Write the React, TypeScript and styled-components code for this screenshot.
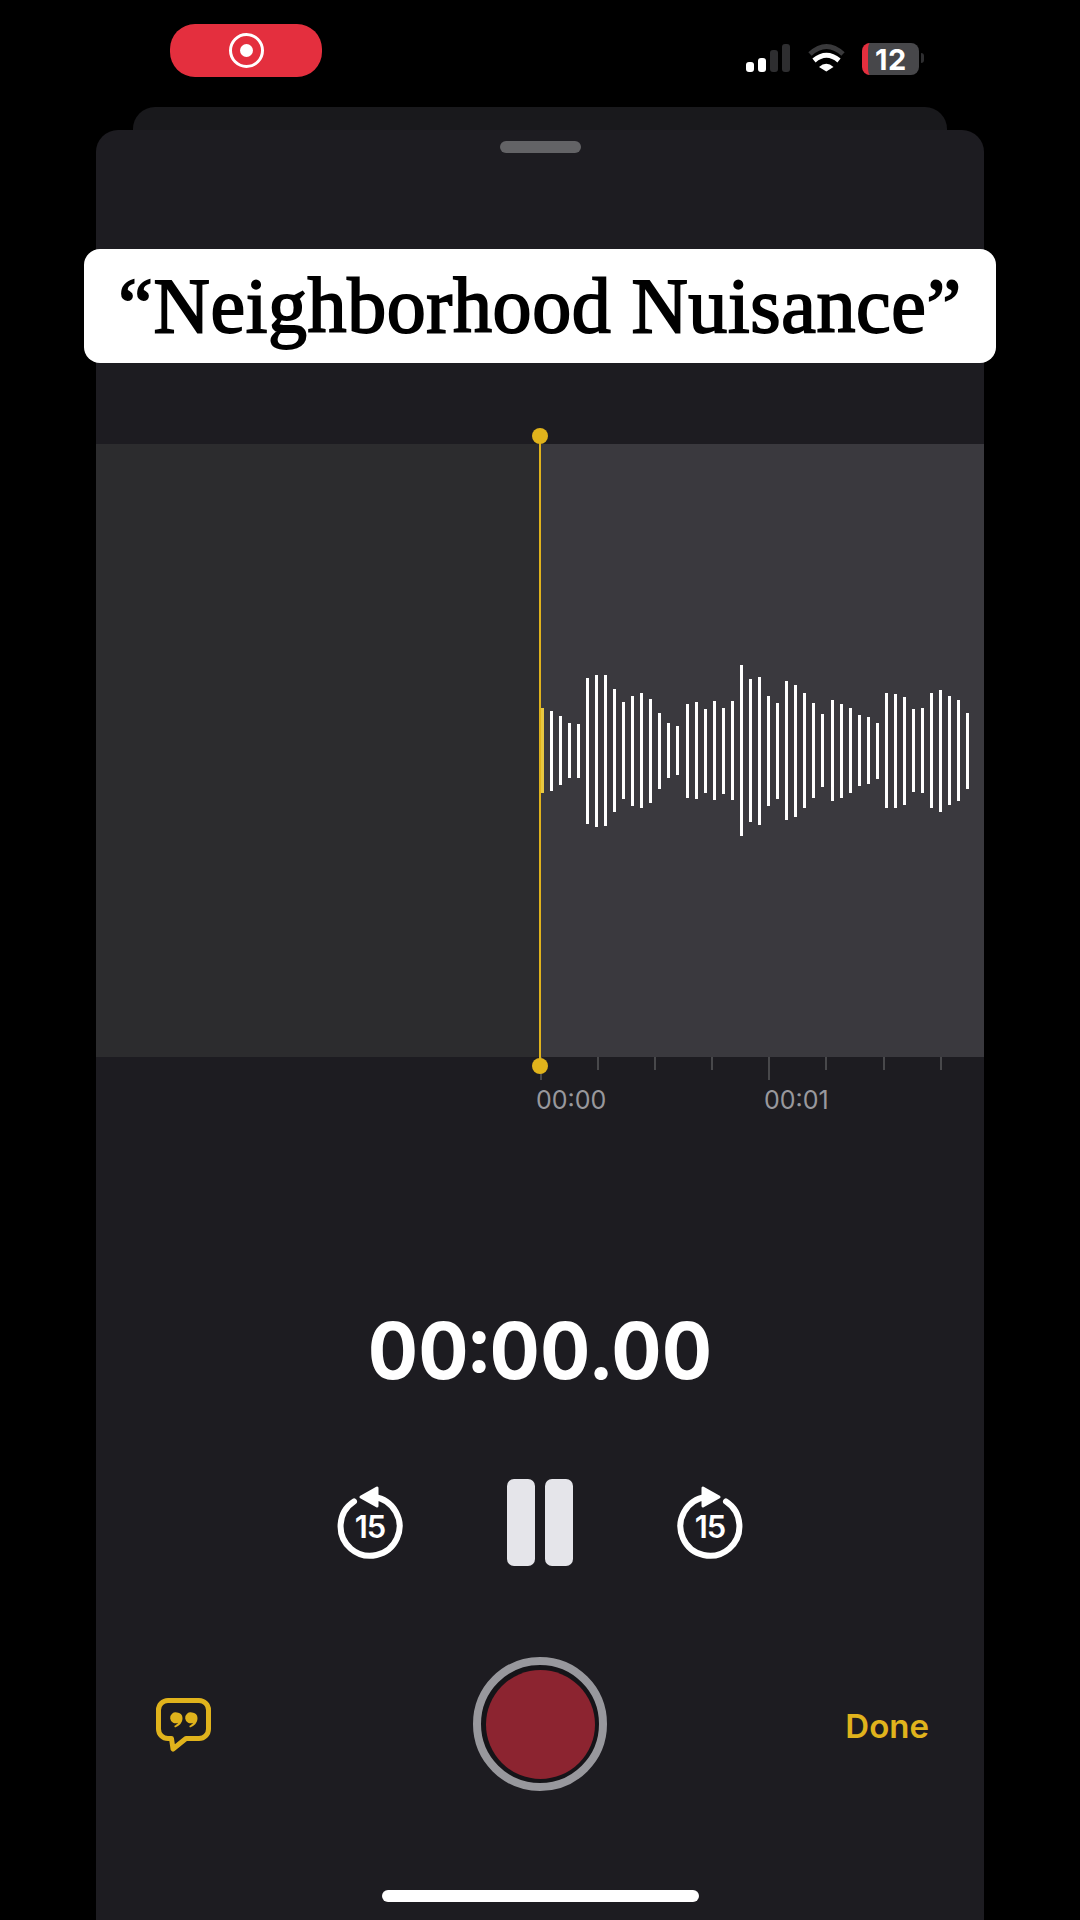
import styled, { createGlobalStyle } from "styled-components";

const GlobalStyle = createGlobalStyle`
  html, body {
    margin: 0;
    padding: 0;
    background: #000;
  }
  * {
    box-sizing: border-box;
  }
`;

const YELLOW = "#e0b31c";

// bar heights in px, read off the recording
const bars = [
  85, 80, 69, 55, 54, 146, 152, 151, 123, 97, 110, 115, 104, 76, 55, 49, 94, 97,
  84, 99, 86, 99, 171, 143, 148, 110, 96, 139, 132, 115, 95, 73, 101, 94, 85, 71,
  67, 56, 115, 114, 108, 83, 85, 115, 122, 109, 101, 76,
];

const ticks = [true, false, false, false, true, false, false, false];

const Screen = styled.div`
  width: 1080px;
  height: 1920px;
  background: #000;
  display: flex;
  flex-direction: column;
  overflow: hidden;
  font-family: Inter, "Liberation Sans", sans-serif;
`;

const StatusBar = styled.div`
  height: 107px;
  display: flex;
  padding: 24px 161px 0 170px;
  justify-content: space-between;
  align-items: flex-start;
`;

const RecordPill = styled.div`
  width: 152px;
  height: 53px;
  border-radius: 25px;
  background: #e42f3e;
  display: flex;
  align-items: center;
  justify-content: center;
`;

const PillRing = styled.div`
  width: 35px;
  height: 35px;
  border-radius: 50%;
  border: 3.5px solid #fff;
  display: flex;
  align-items: center;
  justify-content: center;

  &::after {
    content: "";
    width: 13px;
    height: 13px;
    border-radius: 50%;
    background: #fff;
  }
`;

const StatusIcons = styled.div`
  display: flex;
  align-items: flex-end;
  height: 50px;
`;

const SignalBars = styled.div`
  display: flex;
  align-items: flex-end;
  gap: 4px;
  height: 28px;
  margin-bottom: 2px;
`;

const SignalBar = styled.span<{ $h: number; $on?: boolean }>`
  width: 8px;
  height: ${(p) => p.$h}px;
  border-radius: 3px;
  background: ${(p) => (p.$on ? "#fff" : "#2e2e30")};
`;

const WifiIcon = styled.svg`
  width: 37px;
  height: 29px;
  margin: 0 17px 2px 18px;
  display: block;
  flex: none;
`;

const Battery = styled.div`
  width: 57px;
  height: 32px;
  margin-bottom: -1px;
  border-radius: 8px;
  background: #47474a;
  border-left: 6px solid #e42f3e;
  position: relative;
  display: flex;
  align-items: center;
  justify-content: center;
  color: #fff;
  font-size: 29px;
  font-weight: 700;
  letter-spacing: 0.5px;
  padding-right: 5px;

  &::after {
    content: "";
    position: absolute;
    right: -5px;
    top: 10px;
    width: 3px;
    height: 10px;
    border-radius: 0 3px 3px 0;
    background: #2e2e30;
  }
`;

const BackCard = styled.div`
  height: 23px;
  margin: 0 133px;
  background: #19191c;
  border-radius: 22px 22px 0 0;
`;

const Card = styled.div`
  flex: 1;
  margin: 0 96px;
  background: #1d1c21;
  border-radius: 22px 22px 0 0;
  display: flex;
  flex-direction: column;
`;

const Handle = styled.div`
  width: 81px;
  height: 12px;
  margin: 11px auto 0;
  border-radius: 6px;
  background: #636366;
`;

const TitleBanner = styled.div`
  margin: 96px -12px 0;
  height: 114px;
  background: #fff;
  border-radius: 16px;
  display: flex;
  align-items: center;
  justify-content: center;
  color: #000;
  font-family: "Liberation Serif", serif;
  font-size: 78px;
  -webkit-text-stroke: 1.8px #000;
  letter-spacing: 0.6px;
  white-space: nowrap;
`;

const WaveArea = styled.div`
  margin-top: 81px;
  height: 613px;
  position: relative;
  display: grid;
  grid-template-columns: 1fr 1fr;
`;

const PastPane = styled.div`
  background: #2c2c2e;
`;

const FuturePane = styled.div`
  background: #3a393e;
  display: flex;
  align-items: center;
  gap: 6.07px;
  padding: 0 0 0 0.5px;
  overflow: hidden;
`;

const WaveBar = styled.span<{ $h: number; $first?: boolean }>`
  width: 3px;
  flex: none;
  height: ${(p) => p.$h}px;
  background: ${(p) => (p.$first ? "#e8c840" : "#fff")};
`;

const Playhead = styled.div`
  position: absolute;
  left: 443px;
  top: -8px;
  bottom: -9px;
  width: 2px;
  background: ${YELLOW};

  &::before,
  &::after {
    content: "";
    position: absolute;
    left: -7px;
    width: 16px;
    height: 16px;
    border-radius: 50%;
    background: ${YELLOW};
  }
  &::before {
    top: -8px;
  }
  &::after {
    bottom: -8px;
  }
`;

const Ruler = styled.div`
  height: 23px;
  padding-left: 444px;
  display: flex;
  align-items: flex-start;
`;

const Tick = styled.span<{ $major?: boolean }>`
  width: 57.1px;
  flex: none;
  height: ${(p) => (p.$major ? 23 : 13)}px;
  border-left: 2px solid #48484b;
`;

const RulerLabels = styled.div`
  margin-top: 5px;
  padding-left: 440px;
  display: flex;
`;

const RulerLabel = styled.span`
  width: 228px;
  flex: none;
  font-size: 25px;
  line-height: 30px;
  color: #98989d;
`;

const Timer = styled.div`
  margin-top: 191px;
  height: 90px;
  line-height: 90px;
  text-align: center;
  color: #fff;
  font-size: 78px;
  font-weight: 700;
  font-variant-numeric: tabular-nums;
`;

const Controls = styled.div`
  margin-top: 83px;
  height: 87px;
  display: flex;
  align-items: center;
  justify-content: center;
  gap: 102px;
`;

const SkipSvg = styled.svg`
  width: 70px;
  height: 83px;
  display: block;
  flex: none;
`;

const SkipLabel = styled.text`
  font-family: Inter, "Liberation Sans", sans-serif;
  font-size: 31px;
  font-weight: 600;
  fill: #fff;
  text-anchor: middle;
  letter-spacing: -1px;
`;

const PauseButton = styled.div`
  width: 66px;
  height: 87px;
  display: flex;
  justify-content: space-between;
`;

const PauseBar = styled.span`
  width: 28px;
  border-radius: 7px;
  background: #e5e5ea;
`;

const BottomRow = styled.div`
  margin-top: 91px;
  padding: 0 55px;
  display: grid;
  grid-template-columns: 1fr auto 1fr;
  align-items: center;
`;

const QuoteSvg = styled.svg`
  width: 56px;
  height: 54px;
  margin: 1px 0 0 5px;
  display: block;
`;

const RecordButton = styled.div`
  width: 134px;
  height: 134px;
  border-radius: 50%;
  border: 8px solid #98989d;
  background: #151418;
  display: flex;
  align-items: center;
  justify-content: center;

  &::after {
    content: "";
    width: 109px;
    height: 109px;
    border-radius: 50%;
    background: #8c2430;
  }
`;

const DoneLabel = styled.span`
  justify-self: end;
  color: ${YELLOW};
  font-size: 33px;
  font-weight: 600;
  padding-top: 4px;
`;

const HomeIndicator = styled.div`
  width: 317px;
  height: 12px;
  margin: 99px auto 0;
  border-radius: 6px;
  background: #fff;
`;

const SkipIcon = ({ forward }: { forward?: boolean }) => (
  <SkipSvg viewBox="-35 -45 70 83">
    <g transform={forward ? "scale(-1 1)" : undefined}>
      <path
        d="M4 -29 A29.5 29.5 0 1 1 -16 -24.5"
        fill="none"
        stroke="#fff"
        strokeWidth="6"
        strokeLinecap="round"
      />
      <path
        d="M-9 -29 L7 -38 V-20 Z"
        fill="#fff"
        stroke="#fff"
        strokeWidth="3"
        strokeLinejoin="round"
      />
    </g>
    <SkipLabel x="0" y="12">
      15
    </SkipLabel>
  </SkipSvg>
);

export default function App() {
  return (
    <Screen>
      <GlobalStyle />
      <StatusBar>
        <RecordPill>
          <PillRing />
        </RecordPill>
        <StatusIcons>
          <SignalBars>
            <SignalBar $h={10} $on />
            <SignalBar $h={14} $on />
            <SignalBar $h={22} />
            <SignalBar $h={28} />
          </SignalBars>
          <WifiIcon viewBox="0 0 37 29">
            <path d="M2 11 Q18.5 -4 35 11" fill="none" stroke="#39393b" strokeWidth="5" />
            <path d="M6 17.5 Q18.5 7 31 17.5" fill="none" stroke="#fff" strokeWidth="5" />
            <path d="M11 24 Q18.3 17.5 25.5 24 L18.3 28.5 Z" fill="#fff" />
          </WifiIcon>
          <Battery>12</Battery>
        </StatusIcons>
      </StatusBar>

      <BackCard />
      <Card>
        <Handle />
        <TitleBanner>“Neighborhood Nuisance”</TitleBanner>

        <WaveArea>
          <PastPane />
          <FuturePane>
            {bars.map((h, i) => (
              <WaveBar key={i} $h={h} $first={i === 0} />
            ))}
          </FuturePane>
          <Playhead />
        </WaveArea>

        <Ruler>
          {ticks.map((major, i) => (
            <Tick key={i} $major={major} />
          ))}
        </Ruler>
        <RulerLabels>
          <RulerLabel>00:00</RulerLabel>
          <RulerLabel>00:01</RulerLabel>
        </RulerLabels>

        <Timer>00:00.00</Timer>

        <Controls>
          <SkipIcon />
          <PauseButton>
            <PauseBar />
            <PauseBar />
          </PauseButton>
          <SkipIcon forward />
        </Controls>

        <BottomRow>
          <QuoteSvg viewBox="0 0 56 54">
            <path
              d="M12 2.5 H43 a9.5 9.5 0 0 1 9.5 9.5 V31 a9.5 9.5 0 0 1 -9.5 9.5 H30 L17 51 L15.5 40.5 H12 a9.5 9.5 0 0 1 -9.5 -9.5 V12 a9.5 9.5 0 0 1 9.5 -9.5 Z"
              fill="none"
              stroke={YELLOW}
              strokeWidth="5"
              strokeLinejoin="round"
            />
            <path
              d="M21 14.5 a5.5 5.5 0 0 1 5.5 5.5 c0 4.5 -3 8 -7.5 9.5 l-.8 -1.6 c2 -1 3.5 -2.2 4 -3.2 a5.5 5.5 0 1 1 -1.2 -10.2 Z M36 14.5 a5.5 5.5 0 0 1 5.5 5.5 c0 4.5 -3 8 -7.5 9.5 l-.8 -1.6 c2 -1 3.5 -2.2 4 -3.2 a5.5 5.5 0 1 1 -1.2 -10.2 Z"
              fill={YELLOW}
            />
          </QuoteSvg>
          <RecordButton />
          <DoneLabel>Done</DoneLabel>
        </BottomRow>

        <HomeIndicator />
      </Card>
    </Screen>
  );
}
